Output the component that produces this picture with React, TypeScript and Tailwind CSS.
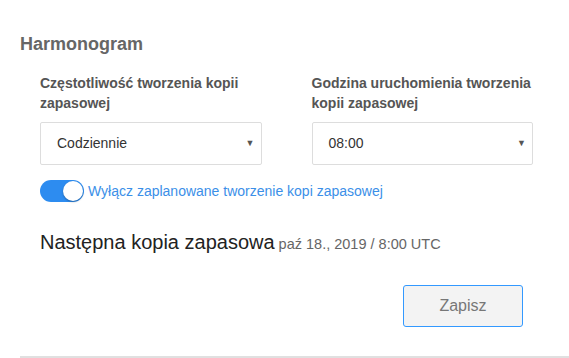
import React from "react";

function Select({ value }: { value: string }) {
  return (
    <div className="relative flex h-[43px] w-full items-center rounded-[2px] border border-[#dddddd] bg-white pl-4 text-[14px] text-[#333333]">
      <span>{value}</span>
      <span className="absolute right-[6px] top-[14px] text-[9px] text-[#555555]">▼</span>
    </div>
  );
}

export default function App() {
  return (
    <div className="h-[358px] w-[569px] overflow-hidden bg-white" style={{ fontFamily: '"Liberation Sans", Arial, sans-serif' }}>
      <div className="pl-5 pt-[33px]">
        <h2 className="text-[18px] font-bold leading-[22px] text-[#666666]">Harmonogram</h2>
        <div className="pl-5 pr-9">
          <div className="mt-[18px] grid grid-cols-2 gap-x-[50px]">
            <div className="flex flex-col">
              <label className="h-[40px] text-[14px] font-bold leading-[20px] text-[#555555]">
                Częstotliwość tworzenia kopii zapasowej
              </label>
              <div className="mt-[9px]">
                <Select value="Codziennie" />
              </div>
            </div>
            <div className="flex flex-col">
              <label className="h-[40px] text-[14px] font-bold leading-[20px] text-[#555555]">
                Godzina uruchomienia tworzenia kopii zapasowej
              </label>
              <div className="mt-[9px]">
                <Select value="08:00" />
              </div>
            </div>
          </div>
          <div className="mt-[15px] flex items-center gap-[4px]">
            <div className="relative h-[22px] w-[44px] rounded-full bg-[#2d8cf0]">
              <div className="absolute right-[1px] top-[1px] h-[20px] w-[20px] rounded-full bg-white shadow-[0_1px_2px_rgba(0,0,0,0.3)]" />
            </div>
            <span className="text-[14px] text-[#3b8fe8]">Wyłącz zaplanowane tworzenie kopi zapasowej</span>
          </div>
          <div className="mt-[28px] flex items-baseline gap-[4px]">
            <span className="text-[20px] leading-[24px] text-[#222222]">Następna kopia zapasowa</span>
            <span className="text-[14.5px] text-[#666666]">paź 18., 2019 / 8:00 UTC</span>
          </div>
          <div className="mt-[29px] flex justify-end pr-[10px]">
            <button className="h-[42px] w-[120px] rounded-[3px] border border-[#3399ff] bg-[#f3f3f3] text-[16px] text-[#777777]">
              Zapisz
            </button>
          </div>
        </div>
        <div className="mt-[29px] h-[2px] bg-[#e0e0e0]" />
      </div>
    </div>
  );
}
